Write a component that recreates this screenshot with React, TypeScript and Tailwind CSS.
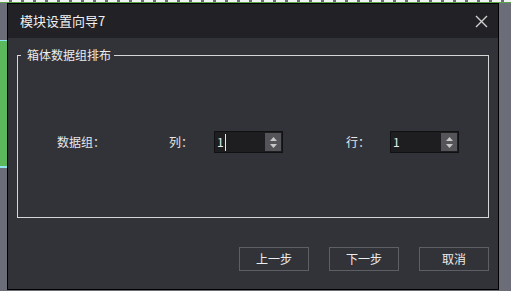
const font = { fontFamily: '"Microsoft YaHei", "Noto Sans CJK SC", "Noto Sans", sans-serif' };

function SpinBox({ value, cursor }: { value: string; cursor?: boolean }) {
  return (
    <div className="flex h-[22px] w-[69px] items-stretch border border-[#111113] bg-[#1e1e20]">
      <div className="flex flex-1 items-center pl-[2px] text-[12px] text-[#e4ecf4]">
        <span>{value}</span>
        {cursor && <span className="ml-[1px] h-[17px] w-px bg-[#e8e8e8]" />}
      </div>
      <div className="my-px mr-px flex w-[16px] flex-col items-center justify-center gap-[3px] bg-[#555559]">
        <svg width="7" height="4" viewBox="0 0 7 4">
          <path d="M3.5 0 L7 4 L0 4 Z" fill="#c8c8c8" />
        </svg>
        <svg width="7" height="4" viewBox="0 0 7 4">
          <path d="M0 0 L7 0 L3.5 4 Z" fill="#c8c8c8" />
        </svg>
      </div>
    </div>
  );
}

function Button({ label }: { label: string }) {
  return (
    <button className="flex h-[24px] w-[70px] items-center justify-center border border-[#5e5f64] text-[12px] text-[#ececec]">
      {label}
    </button>
  );
}

export default function App() {
  return (
    <div className="relative h-[291px] w-[511px] overflow-hidden bg-[#6b6d79]" style={font}>
      {/* dashed guide on top */}
      <div className="absolute left-0 top-0 h-[3px] w-full bg-[repeating-linear-gradient(90deg,#f2f2f2_0px,#f2f2f2_9px,#6b6d79_9px,#6b6d79_12px)]">
        <div className="absolute bottom-0 left-0 h-px w-full bg-[#5aa64a]" />
      </div>

      <div className="flex h-full">
        {/* left strip */}
        <div className="flex w-[7px] flex-col">
          <div className="h-[40px]" />
          <div className="h-[1px] bg-[#8fe6f0]" />
          <div className="h-[125px] bg-[#5cb85c]" />
          <div className="h-[2px] bg-[#8fe6f0]" />
        </div>

        {/* dialog */}
        <div className="mt-[3px] flex h-[287px] w-[492px] flex-col border border-black bg-[#323338]">
          <div className="flex h-[34px] items-center justify-between bg-[#222226] pl-[12px] pr-[10px] text-[13px] text-[#f0f0f0]">
            <span>模块设置向导7</span>
            <svg width="13" height="13" viewBox="0 0 13 13">
              <path d="M1 1 L12 12 M12 1 L1 12" stroke="#d0d0d0" strokeWidth="1.4" />
            </svg>
          </div>

          <div className="flex flex-1 flex-col px-[9px] pt-[11px]">
            <fieldset className="h-[169px] w-[472px] border border-[#d6d6d6]">
              <legend className="ml-[3px] pl-[6px] pr-[3px] text-[12px] leading-[12px] text-[#ececec]">
                箱体数据组排布
              </legend>
              <div className="mt-[70px] flex items-center pl-[39px] text-[12px] text-[#e8e8e8]">
                <span className="w-[112px]">数据组：</span>
                <span className="w-[45px]">列：</span>
                <SpinBox value="1" cursor />
                <span className="ml-[63px] w-[44px]">行：</span>
                <SpinBox value="1" />
              </div>
            </fieldset>

            <div className="mt-[29px] flex justify-end gap-[20px]">
              <Button label="上一步" />
              <Button label="下一步" />
              <Button label="取消" />
            </div>
          </div>
        </div>
      </div>
    </div>
  );
}
